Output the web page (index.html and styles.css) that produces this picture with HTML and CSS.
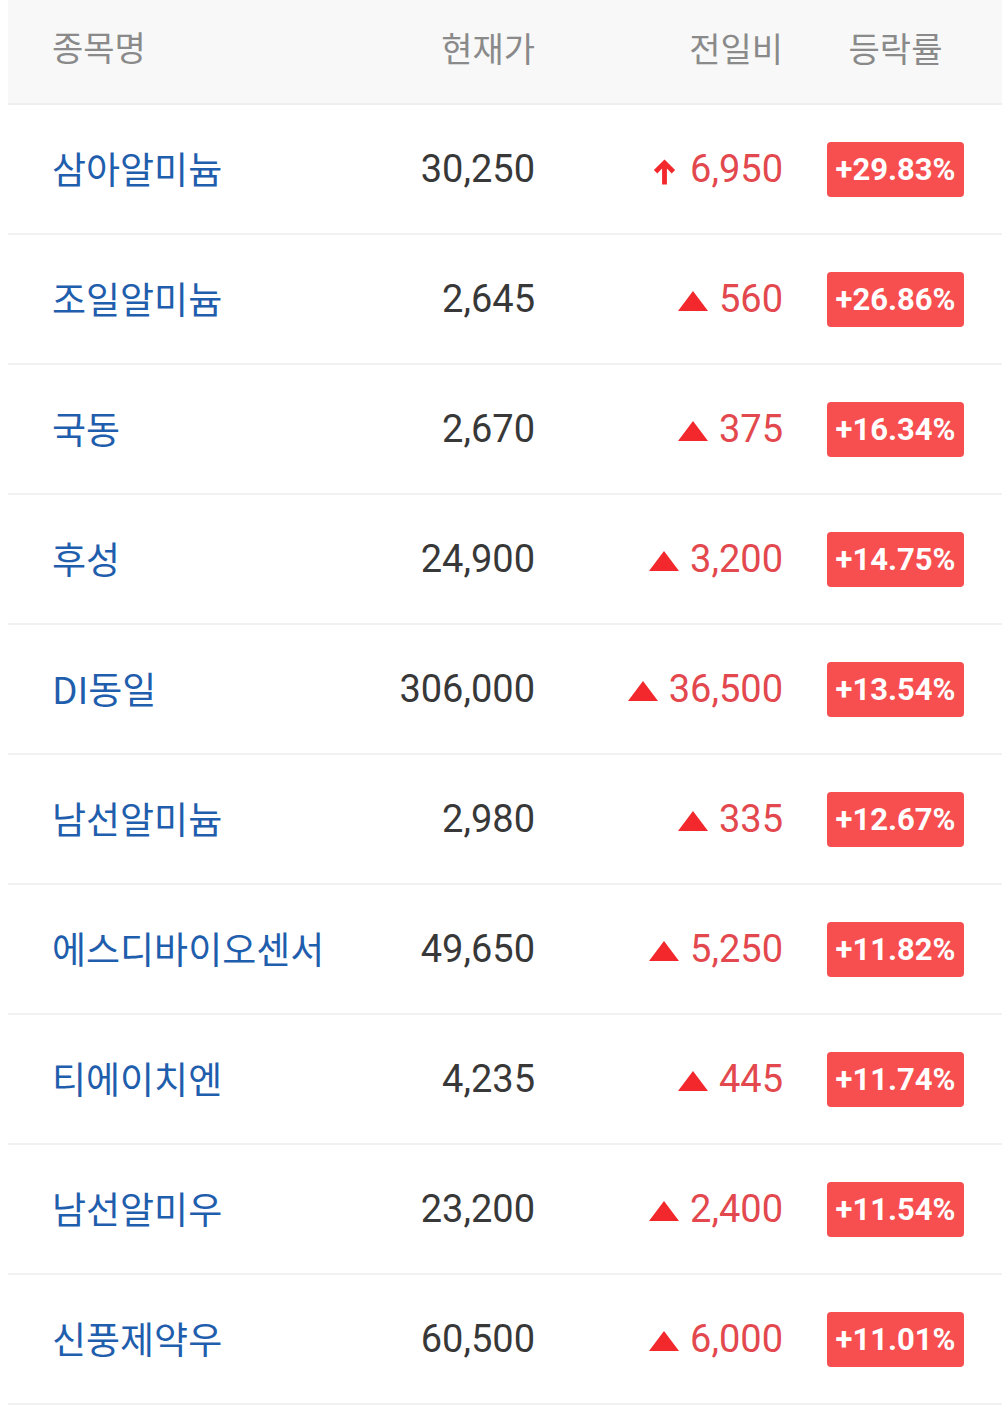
FILE: index.html
```html
<!DOCTYPE html>
<html lang="ko">
<head>
    <meta charset="UTF-8">
    <meta name="viewport" content="width=device-width, initial-scale=1.0">
    <title>상승률 상위</title>
    <link rel="stylesheet" href="styles.css">
</head>
<body>
    <div class="board">
        <div class="row head">
            <span class="name">종목명</span>
            <span class="price">현재가</span>
            <span class="diff">전일비</span>
            <span class="rate">등락률</span>
        </div>
        <div class="row">
            <span class="name">삼아알미늄</span>
            <span class="price">30,250</span>
            <span class="diff"><svg class="arrow" viewBox="0 0 28 28"><path d="M14 2 L3 13 L6.5 16.5 L11.5 11.5 L11.5 28 L16.5 28 L16.5 11.5 L21.5 16.5 L25 13 Z"/></svg>6,950</span>
            <span class="rate"><b class="badge">+29.83%</b></span>
        </div>
        <div class="row">
            <span class="name">조일알미늄</span>
            <span class="price">2,645</span>
            <span class="diff"><i class="tri"></i>560</span>
            <span class="rate"><b class="badge">+26.86%</b></span>
        </div>
        <div class="row">
            <span class="name">국동</span>
            <span class="price">2,670</span>
            <span class="diff"><i class="tri"></i>375</span>
            <span class="rate"><b class="badge">+16.34%</b></span>
        </div>
        <div class="row">
            <span class="name">후성</span>
            <span class="price">24,900</span>
            <span class="diff"><i class="tri"></i>3,200</span>
            <span class="rate"><b class="badge">+14.75%</b></span>
        </div>
        <div class="row">
            <span class="name">DI동일</span>
            <span class="price">306,000</span>
            <span class="diff"><i class="tri"></i>36,500</span>
            <span class="rate"><b class="badge">+13.54%</b></span>
        </div>
        <div class="row">
            <span class="name">남선알미늄</span>
            <span class="price">2,980</span>
            <span class="diff"><i class="tri"></i>335</span>
            <span class="rate"><b class="badge">+12.67%</b></span>
        </div>
        <div class="row">
            <span class="name">에스디바이오센서</span>
            <span class="price">49,650</span>
            <span class="diff"><i class="tri"></i>5,250</span>
            <span class="rate"><b class="badge">+11.82%</b></span>
        </div>
        <div class="row">
            <span class="name">티에이치엔</span>
            <span class="price">4,235</span>
            <span class="diff"><i class="tri"></i>445</span>
            <span class="rate"><b class="badge">+11.74%</b></span>
        </div>
        <div class="row">
            <span class="name">남선알미우</span>
            <span class="price">23,200</span>
            <span class="diff"><i class="tri"></i>2,400</span>
            <span class="rate"><b class="badge">+11.54%</b></span>
        </div>
        <div class="row">
            <span class="name">신풍제약우</span>
            <span class="price">60,500</span>
            <span class="diff"><i class="tri"></i>6,000</span>
            <span class="rate"><b class="badge">+11.01%</b></span>
        </div>
    </div>
</body>
</html>
```

FILE: styles.css
```css
body{
    margin: 0 0 0 8px;
    background-color: #fff;
    font-family: Roboto, "Noto Sans CJK KR", sans-serif;
}
.board{
    width: 994px;
}
.row{
    display: grid;
    grid-template-columns: 328px 155px 248px 181px;
    align-items: center;
    height: 128px;
    padding: 0 38px 0 44px;
    border-bottom: 2px solid #f1f1f1;
}
.row.head{
    height: 95px;
    padding-bottom: 8px;
    background-color: #f8f8f8;
    border-bottom: 2px solid #eeeeee;
    color: #8a8a8a;
    font-size: 34px;
    font-family: "Noto Sans CJK KR", sans-serif;
}
.name{
    font-family: "Noto Sans CJK KR", sans-serif;
    font-size: 37px;
    color: #1f5ead;
    white-space: nowrap;
    padding-bottom: 2px;
}
.head .name{
    font-size: 34px;
    color: #8a8a8a;
}
.price{
    text-align: right;
    font-size: 38px;
    color: #383838;
}
.diff{
    display: flex;
    justify-content: flex-end;
    align-items: center;
    font-size: 38px;
    color: #e2484d;
}
.head .price, .head .diff{
    font-family: "Noto Sans CJK KR", sans-serif;
    font-size: 34px;
    color: #8a8a8a;
}
.rate{
    justify-self: end;
    width: 137px;
    text-align: center;
}
.tri{
    width: 0;
    height: 0;
    border-left: 15px solid transparent;
    border-right: 15px solid transparent;
    border-bottom: 20px solid #f2282c;
    margin-right: 11px;
    margin-top: 4px;
}
.arrow{
    width: 27px;
    height: 28px;
    fill: #f2282c;
    margin-right: 12px;
    margin-top: 4px;
}
.badge{
    display: block;
    height: 55px;
    line-height: 55px;
    border-radius: 4px;
    background-color: #f74e50;
    color: #fff;
    font-size: 31px;
    font-weight: 700;
}
```
